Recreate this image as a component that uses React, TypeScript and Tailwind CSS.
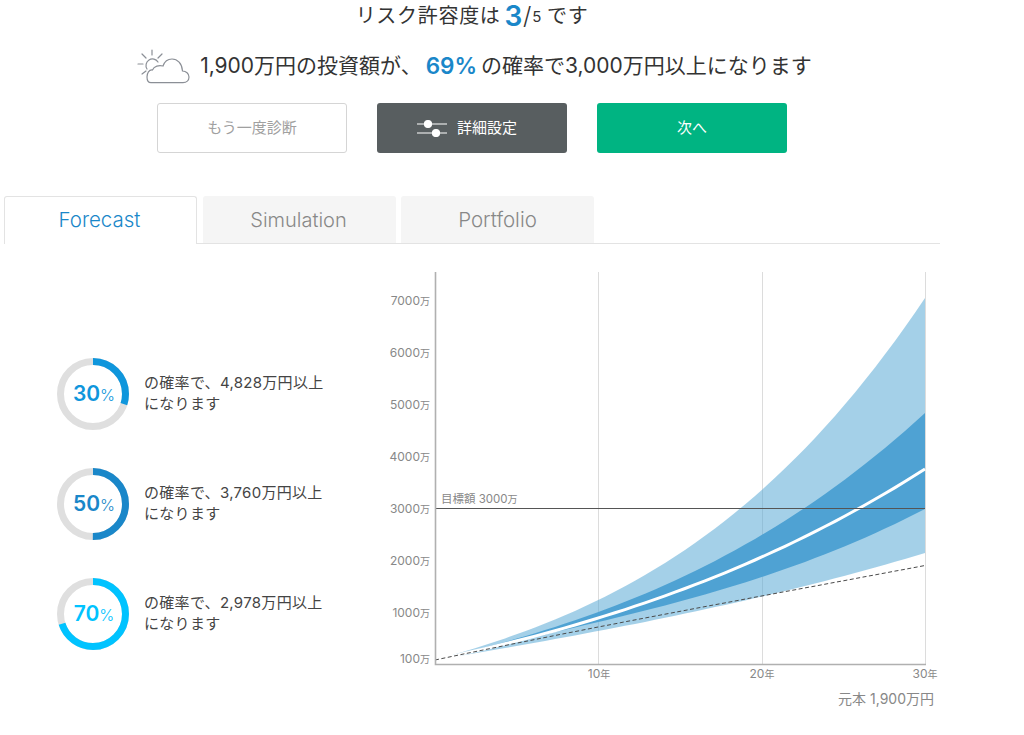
import { FC } from "react";

// chart area in page coords
const X0 = 435;
const W = 490;
const Y0 = 660;

// cubic through the rise (px above Y0) read at 10, 20 and 30 years
const curve = (d1: number, d2: number, d3: number) => {
  const a = 9 * d1 - 4.5 * d2 + d3;
  const b = (27 * d1 - d3) / 2 - 4 * a;
  const c = d3 - a - b;
  const pts: string[] = [];
  for (let i = 0; i <= 49; i++) {
    const t = i / 49;
    const y = Y0 - (a * t + b * t * t + c * t * t * t);
    pts.push(`${(X0 + W * t).toFixed(1)} ${y.toFixed(1)}`);
  }
  return pts;
};

const line = (pts: string[]) => `M${pts.join(" L")}`;
const band = (top: string[], bottom: string[]) => `${line(top)} L${[...bottom].reverse().join(" L")} Z`;

const lightTop = curve(60, 170, 362);
const lightBottom = curve(29, 63.5, 107);
const darkTop = curve(48, 125, 247);
const darkBottom = curve(38, 83, 151);
const median = curve(42, 103, 191);
const principal = curve(33, 64, 94.5);

const yLabels: [string, number][] = [
  ["7000", 301],
  ["6000", 353],
  ["5000", 405],
  ["4000", 457],
  ["3000", 509],
  ["2000", 561],
  ["1000", 613],
  ["100", 659],
];

const Ring: FC<{ pct: number; color: string; text: string; amount: string }> = ({ pct, color, text, amount }) => {
  const c = 2 * Math.PI * 32.5;
  return (
    <div className="flex items-center gap-[15px] h-[72px]">
      <div className="relative w-[72px] h-[72px]">
        <svg width="72" height="72" viewBox="0 0 72 72">
          <circle cx="36" cy="36" r="32.5" fill="none" stroke="#dfdfdf" strokeWidth="7" />
          <circle
            cx="36"
            cy="36"
            r="32.5"
            fill="none"
            stroke={color}
            strokeWidth="7"
            strokeDasharray={`${(c * pct) / 100} ${c}`}
            transform="rotate(-90 36 36)"
          />
        </svg>
        <div className={`absolute inset-0 pl-[2px] flex items-center justify-center ${text}`}>
          <span className="text-[21px] font-semibold">{pct}</span>
          <span className="text-[16px] font-light mt-[2px]">%</span>
        </div>
      </div>
      <p className="mb-[2px] text-[15px] leading-[21px] tracking-[0.3px] text-[#444]">
        の確率で、{amount}万円以上
        <br />
        になります
      </p>
    </div>
  );
};

const App: FC = () => {
  return (
    <div className="w-[1024px] h-[735px] bg-white overflow-hidden font-['Inter','Noto_Sans_CJK_JP',sans-serif]">
      <div className="w-[944px] flex flex-col items-center">
        <h1 className="h-[30px] pt-[2px] flex items-center text-[20px] tracking-[0.7px] text-[#333]">
          リスク許容度は
          <span className="text-[28px] font-semibold text-[#1a87c9] ml-[4px]">3</span>
          <span className="text-[24px] font-light">/</span>
          <span className="text-[15px] mt-[3px]">5</span>
          <span className="ml-[5px]">です</span>
        </h1>
        <div className="mt-[21px] h-[30px] pl-[4px] flex items-center text-[21px] text-[#333]">
          <svg width="54" height="36" viewBox="0 0 54 36" fill="none" stroke="#8b8f96" strokeWidth="1.2" strokeLinecap="round" className="mr-[10px]">
            <path d="M16 2V7M2 16H7M6 6L10 10M6 26L10 23M26 6L22 10" />
            <path d="M11 21A6.5 6.5 0 0 1 22 14" />
            <path d="M15 34.7H47C50.5 34.7 53 32.5 53 29C53 25.5 50 23 46.5 23C46 15.5 41.5 11 36 11C31.5 11 28.5 13.5 27 18C23 17 18 18 16.5 22C13 21.5 11 25 11 29C11 32.5 12.5 34.7 15 34.7Z" />
          </svg>
          1,900万円の投資額が、
          <span className="font-semibold text-[22.5px] text-[#1a87c9] ml-[4px] mr-[4px]">69%</span>
          の確率で3,000万円以上になります
        </div>
        <div className="mt-[22px] flex gap-[30px]">
          <button className="w-[190px] h-[50px] rounded-[3px] border border-[#d5d5d5] text-[15px] text-[#a0a0a0]">
            もう一度診断
          </button>
          <button className="w-[190px] h-[50px] pr-[10px] rounded-[3px] bg-[#585e60] text-[15px] text-white flex items-center justify-center gap-[10px]">
            <svg width="30" height="18" viewBox="0 0 30 18" fill="none" stroke="#fff" strokeWidth="1.2">
              <path d="M0 5H30M0 14H30" />
              <circle cx="11" cy="5" r="3.5" fill="#fff" />
              <circle cx="19" cy="14" r="3.5" fill="#fff" />
            </svg>
            詳細設定
          </button>
          <button className="w-[190px] h-[50px] rounded-[3px] bg-[#00b482] text-[15px] text-white">次へ</button>
        </div>
      </div>

      <div className="mt-[43px] ml-[4px] w-[936px] h-[48px] flex items-end gap-[6px] border-b border-[#e3e3e3]">
        <div className="w-[193px] h-[48px] -mb-px pr-[2px] bg-white border border-b-0 border-[#e3e3e3] rounded-t-[3px] flex items-center justify-center text-[20.5px] font-light text-[#1a87c9]">
          Forecast
        </div>
        <div className="w-[193px] h-[47px] pr-[2px] bg-[#f5f5f5] rounded-t-[3px] flex items-center justify-center text-[20px] font-light text-[#888]">
          Simulation
        </div>
        <div className="w-[193px] h-[47px] pt-[2px] -ml-px bg-[#f5f5f5] rounded-t-[3px] flex items-center justify-center text-[20.5px] font-light text-[#888]">
          Portfolio
        </div>
      </div>

      <div className="flex">
        <div className="w-[380px] pl-[57px] pt-[114px] flex flex-col gap-[38px]">
          <Ring pct={30} color="#0f96dc" text="text-[#0f96dc]" amount="4,828" />
          <Ring pct={50} color="#1a87c9" text="text-[#1a87c9]" amount="3,760" />
          <Ring pct={70} color="#00c3ff" text="text-[#00c3ff]" amount="2,978" />
        </div>
        <svg width="570" height="470" viewBox="380 244 570 470">
          <path d="M598.5 272V664M762.5 272V664M925.5 272V664" stroke="#dcdcdc" strokeWidth="1" />
          <path d={band(lightTop, lightBottom)} fill="#5aa9d6" fillOpacity="0.55" />
          <path d={band(darkTop, darkBottom)} fill="#4fa2d3" />
          <path d={line(median)} fill="none" stroke="#fff" strokeWidth="3" />
          <path d={line(principal)} fill="none" stroke="#4a4a4a" strokeWidth="1" strokeDasharray="4 2.5" />
          <path d="M435 508.5H925" stroke="#555" strokeWidth="1" />
          <path d="M435.5 272V664.5H926" fill="none" stroke="#b0b0b0" strokeWidth="1.6" />
          <text x="441" y="503" fontSize="11.5" fill="#888">
            目標額 3000
            <tspan fontSize="10">万</tspan>
          </text>
          {yLabels.map(([v, y]) => (
            <text key={v} x="430" y={y + 4} fontSize="12" fill="#888" textAnchor="end">
              {v}
              <tspan fontSize="10">万</tspan>
            </text>
          ))}
          {[
            ["10", 599],
            ["20", 762],
            ["30", 925],
          ].map(([v, x]) => (
            <text key={v} x={x} y="678" fontSize="12" fill="#888" textAnchor="middle">
              {v}
              <tspan fontSize="10">年</tspan>
            </text>
          ))}
          <text x="934" y="704" fontSize="14" fill="#888" textAnchor="end">
            元本 1,900万円
          </text>
        </svg>
      </div>
    </div>
  );
};

export default App;
